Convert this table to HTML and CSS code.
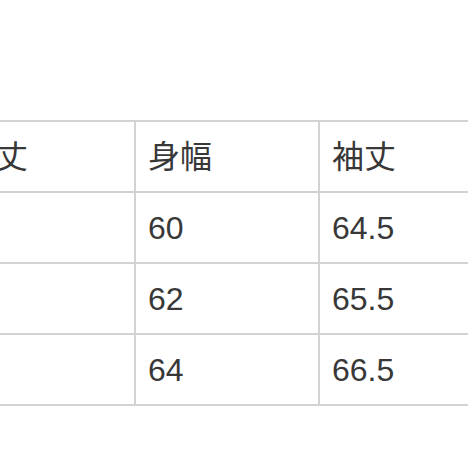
FILE: index.html
```html
<!DOCTYPE html>
<html lang="ja">
<head>
<meta charset="utf-8">
<link rel="stylesheet" href="styles.css">
</head>
<body>
<div class="frame">
  <table class="size-table">
    <colgroup><col class="col"><col class="col"><col class="col"></colgroup>
    <tr><td>着丈</td><td>身幅</td><td>袖丈</td></tr>
    <tr><td>67</td><td>60</td><td>64.5</td></tr>
    <tr><td>69</td><td>62</td><td>65.5</td></tr>
    <tr><td>71</td><td>64</td><td>66.5</td></tr>
  </table>
</div>
</body>
</html>
```
FILE: styles.css
```css
html, body {
  margin: 0;
  padding: 0;
  background: #ffffff;
  overflow: hidden;
}
.frame {
  width: 468px;
  height: 468px;
  overflow: hidden;
  padding-top: 120px;
  box-sizing: border-box;
}
.size-table {
  margin-left: -50px;
  border-collapse: collapse;
  table-layout: fixed;
  width: 552px;
  font-family: "Liberation Sans", "Noto Sans CJK JP", sans-serif;
  font-size: 32px;
  color: #383838;
}
.col {
  width: 184px;
}
.size-table td {
  height: 69px;
  padding: 0 0 0 12px;
  border: 2px solid #d2d2d2;
  vertical-align: middle;
  white-space: nowrap;
  line-height: 1;
}
```
